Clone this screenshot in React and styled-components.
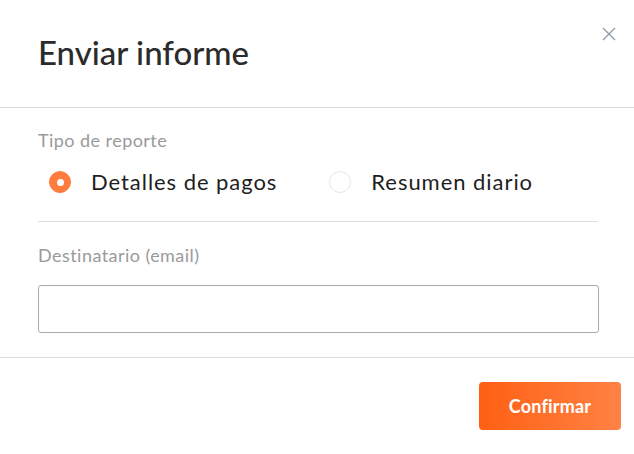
import React, { useState } from 'react';
import styled, { createGlobalStyle } from 'styled-components';

const GlobalStyle = createGlobalStyle`
  html, body {
    margin: 0;
    padding: 0;
    background: #ffffff;
  }
  body {
    font-family: Lato, "Open Sans", sans-serif;
  }
  * {
    box-sizing: border-box;
  }
`;

const Modal = styled.div`
  width: 634px;
  height: 454px;
  background: #fff;
  border-radius: 8px;
  position: relative;
  display: flex;
  flex-direction: column;
`;

const Header = styled.div`
  height: 108px;
  padding: 31px 38px 0;
  border-bottom: 1px solid #dcdcdc;
`;

const Title = styled.h2`
  margin: 0;
  font-size: 33px;
  font-weight: 500;
  color: #2b2b2b;
  line-height: 42px;
`;

const CloseButton = styled.button`
  position: absolute;
  top: 23px;
  right: 14px;
  width: 22px;
  height: 22px;
  padding: 0;
  border: none;
  background: none;
  cursor: pointer;
  display: flex;
  align-items: center;
  justify-content: center;
`;

const Body = styled.div`
  padding: 20px 36px 0 38px;
  height: 250px;
  border-bottom: 1px solid #dcdcdc;
`;

const Label = styled.div`
  font-size: 18px;
  letter-spacing: 0.45px;
  color: #9a9a9a;
  line-height: 24px;
`;

const RadioGroup = styled.div`
  display: flex;
  align-items: flex-start;
  gap: 52px;
  padding: 15px 0 0 11px;
  height: 70px;
  border-bottom: 1px solid #dedede;
`;

const RadioOption = styled.label`
  display: flex;
  align-items: center;
  gap: 20px;
  cursor: pointer;
  font-size: 22px;
  letter-spacing: 0.95px;
  color: #1e1e1e;
  line-height: 30px;
`;

const RadioCircle = styled.span`
  width: 22px;
  height: 22px;
  flex: none;
  border-radius: 50%;
  display: inline-flex;
  align-items: center;
  justify-content: center;
  background: ${p => (p.$checked ? '#ff7b3e' : '#fff')};
  border: 1px solid ${p => (p.$checked ? '#ff7b3e' : '#e6e6e6')};

  &::after {
    content: '';
    width: 7px;
    height: 7px;
    border-radius: 50%;
    background: #fff;
    display: ${p => (p.$checked ? 'block' : 'none')};
  }
`;

const Field = styled.div`
  padding-top: 21px;
`;

const EmailInput = styled.input`
  display: block;
  width: 561px;
  height: 48px;
  margin-top: 18px;
  border: 1px solid #a9a9a9;
  border-radius: 3px;
  padding: 0 12px;
  font-size: 16px;
  font-family: inherit;
  outline: none;
`;

const Footer = styled.div`
  display: flex;
  justify-content: flex-end;
  padding: 24px 13px 0;
`;

const ConfirmButton = styled.button`
  width: 142px;
  height: 48px;
  border: none;
  border-radius: 4px;
  background: linear-gradient(90deg, #ff6012, #ff8245);
  color: #fff;
  font-family: inherit;
  font-size: 18px;
  font-weight: 700;
  letter-spacing: 0.2px;
  cursor: pointer;
`;

const options = ['Detalles de pagos', 'Resumen diario'];

const App = () => {
  const [selected, setSelected] = useState(0);
  return (
    <>
      <GlobalStyle />
      <Modal>
        <CloseButton aria-label="Cerrar">
          <svg width="14" height="14" viewBox="0 0 14 14">
            <path d="M1 1 L13 13 M13 1 L1 13" stroke="#8e9aa6" strokeWidth="1.3" fill="none" />
          </svg>
        </CloseButton>
        <Header>
          <Title>Enviar informe</Title>
        </Header>
        <Body>
          <Label>Tipo de reporte</Label>
          <RadioGroup>
            {options.map((opt, i) => (
              <RadioOption key={opt} onClick={() => setSelected(i)}>
                <RadioCircle $checked={selected === i} />
                {opt}
              </RadioOption>
            ))}
          </RadioGroup>
          <Field>
            <Label>Destinatario (email)</Label>
            <EmailInput type="email" />
          </Field>
        </Body>
        <Footer>
          <ConfirmButton>Confirmar</ConfirmButton>
        </Footer>
      </Modal>
    </>
  );
};

export default App;
